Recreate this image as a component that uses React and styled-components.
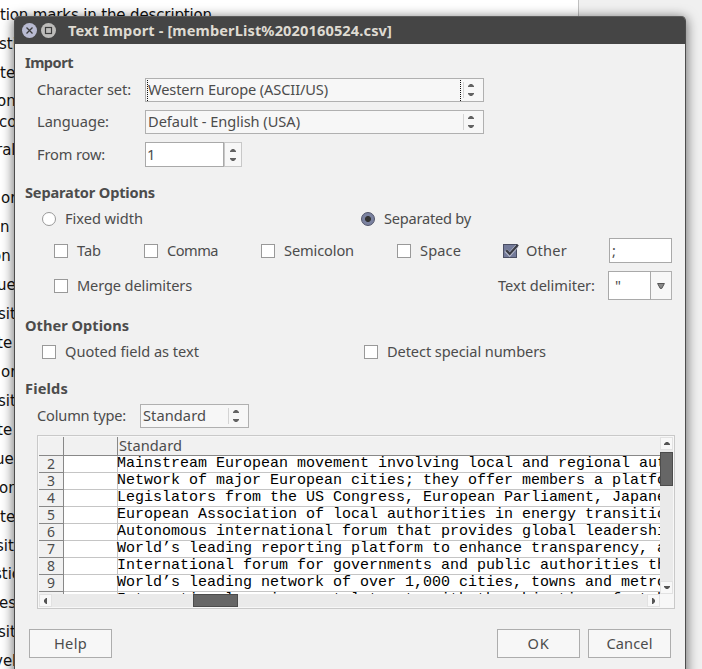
import React, { useLayoutEffect, useRef, useState } from "react";
import styled, { createGlobalStyle, css } from "styled-components";

const GlobalStyle = createGlobalStyle`
  *, *::before, *::after { box-sizing: border-box; }
  body { margin: 0; background: #f0f0f0; }
`;

const UI_FONT = '"Noto Sans", "Open Sans", sans-serif';
const INK = "#4c4c4c";

/* ---------- Text whose tracking is adjusted to fill a given width ---------- */

const TextSpan = styled.span`
  justify-self: start;
  flex: none;
  padding-bottom: 2px;
  white-space: pre;
`;

function Label({ children, width }) {
  const ref = useRef(null);
  const [tracking, setTracking] = useState(0);
  useLayoutEffect(() => {
    const natural = ref.current.getBoundingClientRect().width;
    setTracking((width - natural) / children.length);
  }, []);
  return (
    <TextSpan ref={ref} style={{ letterSpacing: tracking }}>
      {children}
    </TextSpan>
  );
}

/* ---------- Document behind the dialog ---------- */

const Desktop = styled.main`
  position: relative;
  width: 702px;
  height: 669px;
  overflow: hidden;
  background: #f0f0f0;
`;

const Paper = styled.section`
  width: 579px;
  height: 669px;
  padding-top: 5px;
  overflow: hidden;
  background: #fff;
  border-right: 1px solid #c0c0c0;
  font: 15px/20px "DejaVu Sans", "Noto Sans", sans-serif;
  color: #111;
`;

const PaperLine = styled.div`
  height: ${(p) => p.$height}px;
  margin-left: ${(p) => p.$shift || 0}px;
  white-space: pre;
`;

const paperLines = [
  { text: "tion marks in the description", height: 29, width: 212 },
  { text: "stion", height: 29, shift: -1 },
  { text: "ted", height: 28 },
  { text: "on", height: 21, shift: -3 },
  { text: "cou", height: 28, shift: -1 },
  { text: "ral", height: 48, shift: -4 },
  { text: "or", height: 29, shift: 1 },
  { text: "n", height: 29 },
  { text: "on", height: 29, shift: -8 },
  { text: "ue", height: 29, shift: -3 },
  { text: "site", height: 29, shift: -2 },
  { text: "te", height: 29, shift: -3 },
  { text: "or", height: 29, shift: 1 },
  { text: "site", height: 29, shift: -2 },
  { text: "te", height: 29, shift: -3 },
  { text: "ue", height: 29, shift: -5 },
  { text: "on", height: 29, shift: -1 },
  { text: "te", height: 29 },
  { text: "site", height: 28, shift: -4 },
  { text: "stio", height: 29, shift: -6 },
  { text: "es", height: 29, shift: -1 },
  { text: "site", height: 29, shift: -2 },
  { text: "vel", height: 20, shift: -6 },
];

/* ---------- Window frame ---------- */

const Dialog = styled.section`
  position: absolute;
  left: 14px;
  top: 16px;
  width: 672px;
  height: 670px;
  border: 1px solid #4d4d4d;
  border-top: 0;
  border-radius: 5px 5px 0 0;
  background: #f1f1f1;
  box-shadow: 0 2px 12px 1px rgba(0, 0, 0, 0.55);
  color: ${INK};
  font: 14.6px/20px ${UI_FONT};
`;

const TitleBar = styled.header`
  display: flex;
  align-items: center;
  height: 28px;
  padding: 0 0 0 7px;
  border-top: 1px solid #5b5b5b;
  border-radius: 4px 4px 0 0;
  background: #454545;
  color: #dfdbd2;
  font-weight: 700;
`;

const WindowButton = styled.button`
  display: flex;
  width: 15px;
  height: 15px;
  margin-right: ${(p) => p.$gap}px;
  padding: 0;
  border: 0;
  border-radius: 50%;
  background: ${(p) => (p.$tone === "blue" ? "#b9bbd2" : "#bdbcba")};
`;

const Body = styled.div`
  display: flex;
  flex-direction: column;
  padding: 9px 10px 0;
`;

const Heading = styled.h2`
  display: flex;
  align-items: center;
  height: 20px;
  margin: ${(p) => p.$top || 0}px 0 0;
  font: 700 14.6px/20px ${UI_FONT};
`;

const FormRow = styled.div`
  display: grid;
  grid-template-columns: ${(p) => p.$columns};
  align-items: center;
  height: ${(p) => p.$height}px;
  margin-top: ${(p) => p.$top}px;
  padding-left: ${(p) => p.$indent}px;
`;

/* ---------- Controls ---------- */

const Choice = styled.label`
  display: flex;
  align-items: center;
  gap: 9px;
  height: 20px;
`;

const CheckBox = styled.span`
  flex: none;
  width: 14px;
  height: 14px;
  border: 1px solid ${(p) => (p.$on ? "#4a4e63" : "#999")};
  background: ${(p) => (p.$on ? "#747b9a" : "#fff")};

  svg {
    display: block;
    margin: -2px 0 0 -1px;
    overflow: visible;
  }
`;

const Radio = styled.span`
  flex: none;
  width: 14px;
  height: 14px;
  border: 1px solid ${(p) => (p.$on ? "#4f5369" : "#999")};
  border-radius: 50%;
  background: ${(p) =>
    p.$on ? "radial-gradient(circle, #333 0 2.6px, #7b82a0 3.4px)" : "#fff"};
`;

const Combo = styled.div`
  display: flex;
  align-items: center;
  justify-content: space-between;
  width: ${(p) => p.$width}px;
  height: 24px;
  padding: 0 9px 0 2px;
  border: 1px solid #b0b0b0;
  background: #f7f7f7;
`;

const ComboValue = styled.span`
  display: flex;
  flex: 1;
  align-items: center;
  height: 21px;
  margin-right: 2px;
  ${(p) =>
    p.$focused &&
    css`
      margin-left: -1px;
      border: dotted #111;
      border-width: 0 1px;
    `}
`;

const ComboArrows = styled.span`
  display: flex;
  align-items: center;
  height: 16px;
  padding-left: 4px;
  border-left: 1px solid #d4d4d4;
`;

const Spinner = styled.div`
  display: flex;
  width: 97px;
  height: 25px;
`;

const TextField = styled.div`
  display: flex;
  align-items: center;
  width: ${(p) => p.$width}px;
  height: ${(p) => p.$height}px;
  padding: 0 0 2px ${(p) => p.$pad}px;
  border: 1px solid #a9a9a9;
  background: #fff;
`;

const FieldButton = styled.div`
  display: flex;
  align-items: center;
  justify-content: center;
  flex: 1;
  border: 1px solid ${(p) => p.$edge};
  border-left-width: ${(p) => (p.$joined ? 0 : 1)}px;
  background: #f7f7f7;
`;

const DropDown = styled.div`
  display: flex;
  width: 64px;
  height: 29px;
  margin-left: -1px;
`;

const Footer = styled.footer`
  display: flex;
  gap: 8px;
  margin-top: 20px;
  padding: 0 4px;
`;

const PushButton = styled.button`
  display: flex;
  align-items: center;
  justify-content: center;
  width: 83px;
  height: 29px;
  margin-right: ${(p) => (p.$pushRest ? "auto" : 0)};
  padding: 0;
  border: 1px solid #adadad;
  background: #f7f7f7;
  color: ${INK};
  font: inherit;
`;

/* ---------- Preview grid ---------- */

const Preview = styled.div`
  display: grid;
  grid-template-columns: 621px 13px;
  grid-template-rows: 157px 13px;
  width: 638px;
  height: 174px;
  margin: 7px 0 0 12px;
  padding: 1px;
  border: 1px solid #c9c9c9;
  background: #f7f7f7;
`;

const Sheet = styled.div`
  overflow: hidden;
  background: #fff;
`;

const SheetHeader = styled.div`
  display: grid;
  grid-template-columns: 25px 54px 1fr;
  height: 19px;
  border-bottom: 1px solid #888;
  background: #f1f1f1;
  line-height: 16px;
`;

const HeaderCell = styled.div`
  display: flex;
  align-items: center;
  height: 18px;
  border-right: ${(p) => (p.$last ? 0 : 1)}px solid #888;
  padding: 0 0 ${(p) => (p.$last ? 1 : 0)}px ${(p) => (p.$last ? 1 : 0)}px;
`;

const SheetRow = styled.div`
  display: grid;
  grid-template-columns: 25px 54px 1fr;
  height: 17px;
`;

const RowNumber = styled.div`
  height: 17px;
  border-right: 1px solid #888;
  border-bottom: 1px solid #888;
  background: #f1f1f1;
  font-size: 14px;
  line-height: 15px;
  text-align: center;
`;

const SheetCell = styled.div`
  min-width: 0;
  height: 17px;
  border-bottom: 1px solid #c5c5c5;
  border-right: ${(p) => (p.$blank ? 1 : 0)}px solid #c5c5c5;
  color: #000;
  font: 15px/16px "Liberation Mono", monospace;
  text-indent: -1px;
  white-space: pre;
`;

const ScrollTrack = styled.div`
  display: flex;
  flex-direction: ${(p) => (p.$vertical ? "column" : "row")};
  background: #eaeaea;
`;

const ScrollButton = styled.div`
  display: flex;
  flex: none;
  align-items: center;
  justify-content: center;
  width: 13px;
  height: 13px;
  background: #f8f8f8;
  box-shadow: inset 0 0 0 1px #e2e2e2;
`;

const ScrollThumb = styled.div`
  width: ${(p) => p.$width}px;
  height: ${(p) => p.$height}px;
  margin: ${(p) => p.$margin};
  border: 1px solid #4c4c4c;
  background: #666;
`;

const previewRows = [
  ["2", "Mainstream European movement involving local and regional authorities"],
  ["3", "Network of major European cities; they offer members a platform"],
  ["4", "Legislators from the US Congress, European Parliament, Japanese"],
  ["5", "European Association of local authorities in energy transition"],
  ["6", "Autonomous international forum that provides global leadership"],
  ["7", "World’s leading reporting platform to enhance transparency, and"],
  ["8", "International forum for governments and public authorities that"],
  ["9", "World’s leading network of over 1,000 cities, towns and metropolises"],
  ["", "International environmental treaty with the objective of stabilizing"],
];

/* ---------- Glyphs ---------- */

const Arrow = ({ direction, size = 6 }) => {
  const shapes = {
    up: "M0 4H6V3L4 1H2L0 3Z",
    down: "M0 1H6V2L4 4H2L0 2Z",
    left: "M4 0H3L1 2V4L3 6H4Z",
    right: "M1 0H2L4 2V4L2 6H1Z",
  };
  const upright = direction === "left" || direction === "right";
  return (
    <svg width={upright ? 5 : size} height={upright ? 6 : 5} viewBox={upright ? "0 0 5 6" : "0 0 6 5"}>
      <path d={shapes[direction]} fill="#555" />
    </svg>
  );
};

const UpDown = () => (
  <svg width="6" height="14" viewBox="0 0 6 14" fill="#626262">
    <path d="M0 4V3L2 1H4L6 3V4ZM0 10V11L2 13H4L6 11V10Z" />
  </svg>
);

const Check = () => (
  <svg width="16" height="15" viewBox="0 0 16 15" fill="none">
    <path d="M2.8 7.6L6.6 11.5L14 3" stroke="#b9bdce" strokeWidth="3.6" />
    <path d="M3.2 7.2L6.7 10.9L15 1.8" stroke="#3a3c45" strokeWidth="2.2" />
  </svg>
);

const Option = ({ width, children, on, radio }) => (
  <Choice>
    {radio ? <Radio $on={on} /> : <CheckBox $on={on}>{on && <Check />}</CheckBox>}
    <Label width={width}>{children}</Label>
  </Choice>
);

const ComboBox = ({ width, textWidth, focused, children }) => (
  <Combo $width={width}>
    <ComboValue $focused={focused}>
      <Label width={textWidth}>{children}</Label>
    </ComboValue>
    <ComboArrows>
      <UpDown />
    </ComboArrows>
  </Combo>
);

export default function App() {
  return (
    <Desktop>
      <GlobalStyle />
      <Paper>
        {paperLines.map((line, i) => (
          <PaperLine key={i} $height={line.height} $shift={line.shift}>
            {line.width ? <Label width={line.width}>{line.text}</Label> : line.text}
          </PaperLine>
        ))}
      </Paper>

      <Dialog>
        <TitleBar>
          <WindowButton $tone="blue" $gap={4} aria-label="Close">
            <svg width="15" height="15" viewBox="0 0 15 15">
              <path d="M4.5 4.5L10.5 10.5M10.5 4.5L4.5 10.5" stroke="#3c3c3c" strokeWidth="1.3" />
            </svg>
          </WindowButton>
          <WindowButton $gap={12} aria-label="Maximize">
            <svg width="15" height="15" viewBox="0 0 15 15">
              <rect x="4.5" y="4.5" width="6" height="6" fill="none" stroke="#3c3c3c" strokeWidth="1.2" />
            </svg>
          </WindowButton>
          <Label width={324}>Text Import - [memberList%2020160524.csv]</Label>
        </TitleBar>

        <Body>
          <Heading><Label width={48}>Import</Label></Heading>
          <FormRow $columns="108px auto" $height={24} $top={5} $indent={12}>
            <Label width={94}>Character set:</Label>
            <ComboBox width={339} textWidth={180} focused>Western Europe (ASCII/US)</ComboBox>
          </FormRow>
          <FormRow $columns="108px auto" $height={24} $top={8} $indent={12}>
            <Label width={72}>Language:</Label>
            <ComboBox width={339} textWidth={152}>Default - English (USA)</ComboBox>
          </FormRow>
          <FormRow $columns="108px auto" $height={25} $top={8} $indent={12}>
            <Label width={68}>From row:</Label>
            <Spinner>
              <TextField $width={79} $height={25} $pad={1}>1</TextField>
              <FieldButton $edge="#c8c8c8"><UpDown /></FieldButton>
            </Spinner>
          </FormRow>

          <Heading $top={16}><Label width={130}>Separator Options</Label></Heading>
          <FormRow $columns="319px auto" $height={20} $top={6} $indent={17}>
            <Option radio width={78}>Fixed width</Option>
            <Option radio on width={87}>Separated by</Option>
          </FormRow>
          <FormRow $columns="90px 117px 136px 106px 106px auto" $height={25} $top={9} $indent={29}>
            <Option width={24}>Tab</Option>
            <Option width={51}>Comma</Option>
            <Option width={70}>Semicolon</Option>
            <Option width={41}>Space</Option>
            <Option width={41} on>Other</Option>
            <TextField $width={63} $height={25} $pad={2}>;</TextField>
          </FormRow>
          <FormRow $columns="444px 111px auto" $height={29} $top={8} $indent={29}>
            <Option width={115}>Merge delimiters</Option>
            <Label width={97}>Text delimiter:</Label>
            <DropDown>
              <TextField $width={43} $height={29} $pad={6}>"</TextField>
              <FieldButton $edge="#b0b0b0" $joined>
                <svg width="8" height="6" viewBox="0 0 8 6">
                  <path d="M.6 .5H7.4L4.8 5.4H3.2Z" fill="#888" stroke="#555" />
                </svg>
              </FieldButton>
            </DropDown>
          </FormRow>

          <Heading $top={16}><Label width={104}>Other Options</Label></Heading>
          <FormRow $columns="322px auto" $height={20} $top={6} $indent={17}>
            <Option width={134}>Quoted field as text</Option>
            <Option width={159}>Detect special numbers</Option>
          </FormRow>

          <Heading $top={17}><Label width={43}>Fields</Label></Heading>
          <FormRow $columns="103px auto" $height={24} $top={5} $indent={12}>
            <Label width={89}>Column type:</Label>
            <ComboBox width={109} textWidth={63}>Standard</ComboBox>
          </FormRow>

          <Preview>
            <Sheet>
              <SheetHeader>
                <HeaderCell />
                <HeaderCell />
                <HeaderCell $last><Label width={63}>Standard</Label></HeaderCell>
              </SheetHeader>
              {previewRows.map(([number, text], i) => (
                <SheetRow key={i}>
                  <RowNumber>{number}</RowNumber>
                  <SheetCell $blank />
                  <SheetCell>{text}</SheetCell>
                </SheetRow>
              ))}
            </Sheet>
            <ScrollTrack $vertical>
              <ScrollButton><Arrow direction="up" /></ScrollButton>
              <ScrollThumb $width={13} $height={34} $margin="2px 0 auto" />
              <ScrollButton><Arrow direction="down" /></ScrollButton>
            </ScrollTrack>
            <ScrollTrack>
              <ScrollButton><Arrow direction="left" /></ScrollButton>
              <ScrollThumb $width={45} $height={13} $margin="0 auto 0 141px" />
              <ScrollButton><Arrow direction="right" /></ScrollButton>
            </ScrollTrack>
          </Preview>

          <Footer>
            <PushButton $pushRest><Label width={33}>Help</Label></PushButton>
            <PushButton><Label width={22}>OK</Label></PushButton>
            <PushButton><Label width={46}>Cancel</Label></PushButton>
          </Footer>
        </Body>
      </Dialog>
    </Desktop>
  );
}
